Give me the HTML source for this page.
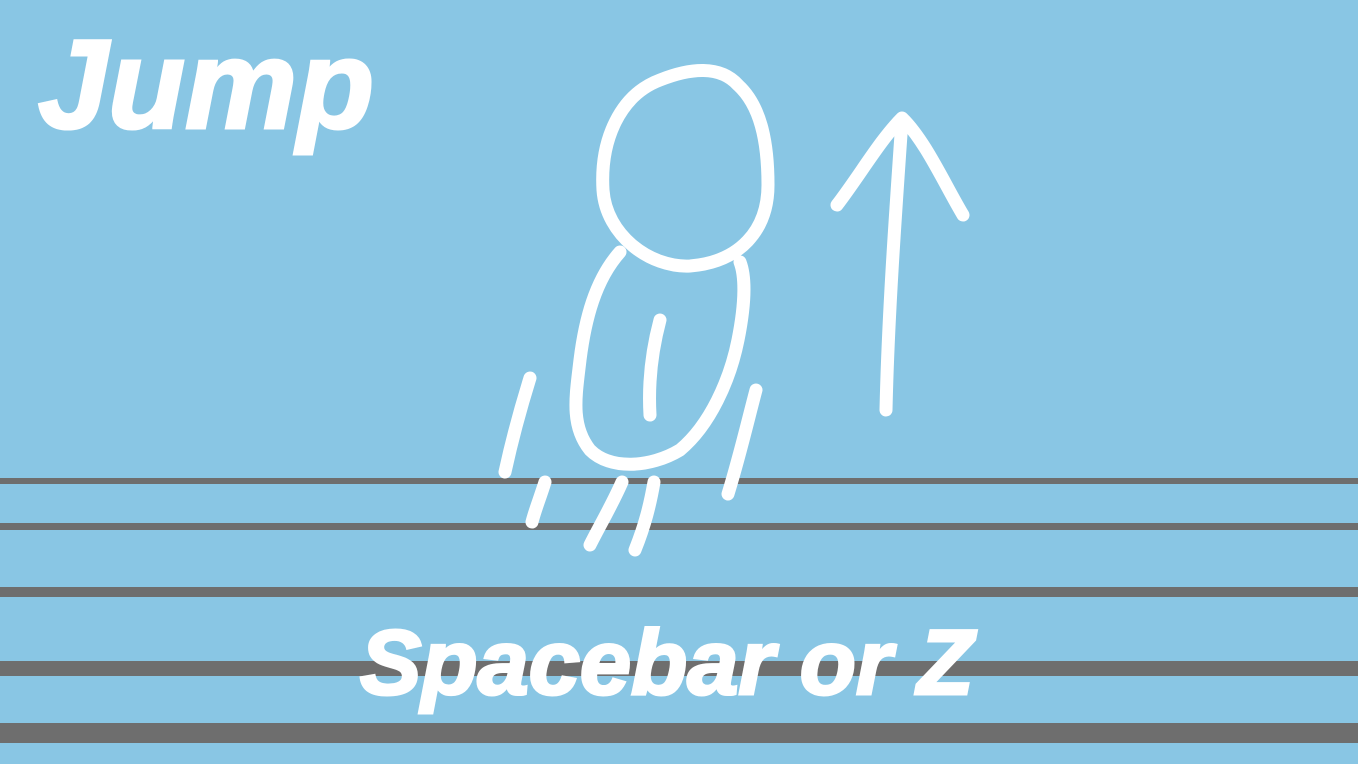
<!DOCTYPE html>
<html><head><style>
html,body{margin:0;padding:0}
body{width:1358px;height:764px;background:#89c6e4;position:relative;overflow:hidden;font-family:"Liberation Sans",sans-serif}
.l{position:absolute;left:0;width:1358px;background:#6e6e6e}
.t{position:absolute;color:#fff;font-weight:bold;font-style:italic;white-space:nowrap;line-height:1;-webkit-text-stroke:3px #fff}
</style></head><body>
<div class="l" style="top:478px;height:6px"></div>
<div class="l" style="top:523px;height:7px"></div>
<div class="l" style="top:587px;height:10px"></div>
<div class="l" style="top:661px;height:15px"></div>
<div class="l" style="top:723px;height:20px"></div>
<div class="t" style="left:38px;top:22px;font-size:126px">Jump</div>
<div class="t" style="left:360px;top:617px;font-size:92px">Spacebar or Z</div>
<svg style="position:absolute;left:0;top:0" width="1358" height="764" fill="none" stroke="#fff" stroke-width="13" stroke-linecap="round" stroke-linejoin="round">
<path d="M738 85 C720 65 690 68 660 80 C620 95 600 140 603 190 C606 235 650 268 690 266 C740 262 768 230 768 185 C768 140 760 105 738 85"/>
<path d="M620 252 C595 280 585 320 580 360 C576 395 570 425 590 450 C610 470 650 468 680 450 C710 425 730 380 738 340 C746 300 745 275 740 262"/>
<path d="M660 320 C652 350 648 380 650 415"/>
<path d="M530 378 C520 410 512 440 505 472"/>
<path d="M545 482 C540 498 535 510 532 522"/>
<path d="M622 482 C612 505 600 525 590 545"/>
<path d="M654 482 C650 505 645 525 635 550"/>
<path d="M756 390 C748 420 740 455 728 494"/>
<path d="M886 410 C888 320 895 220 902 120"/>
<path d="M837 205 C860 175 880 140 902 118 C925 140 945 185 963 215"/>
</svg>
</body></html>
